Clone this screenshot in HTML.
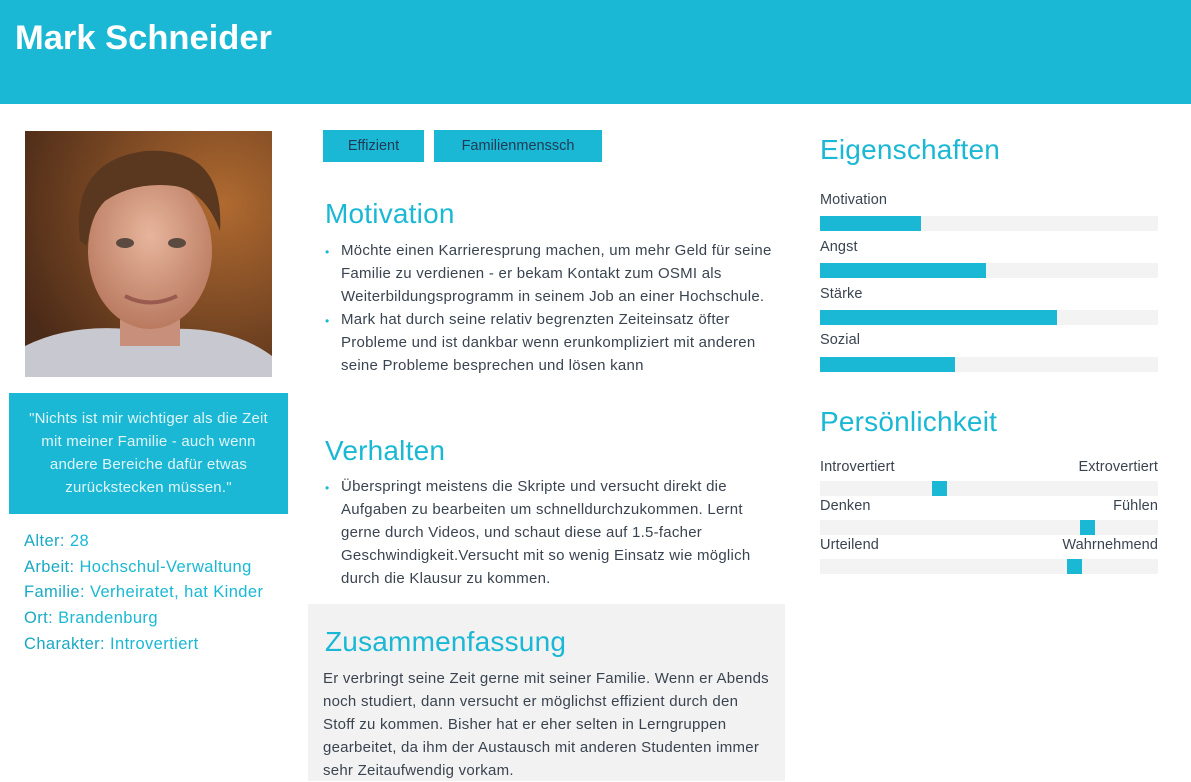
<!DOCTYPE html>
<html><head><meta charset="utf-8"><style>
*{margin:0;padding:0;box-sizing:border-box}
body{width:1191px;height:781px;overflow:hidden;background:#fff;font-family:"Liberation Sans",sans-serif;color:#3a4450;position:relative}
.a{position:absolute;white-space:nowrap}
.hdr{position:absolute;left:0;top:0;width:1191px;height:104px;background:#1ab8d4}
h1{position:absolute;left:15px;top:19px;font-size:34.5px;color:#fff;font-weight:bold;letter-spacing:0px}
.h2{position:absolute;font-size:28px;color:#1ab8d4;white-space:nowrap;letter-spacing:0.2px}
.t{font-size:15px;line-height:23px;letter-spacing:0.25px}
.b{position:absolute;left:325px;color:#1ab8d4;font-size:12px}
.tag{position:absolute;top:130px;height:32px;background:#1ab8d4;color:#1f3a55;font-size:14.5px;line-height:32px;text-align:center}
.bar{position:absolute;left:820px;width:338px;height:15px;background:#f3f3f3}
.bar i{position:absolute;left:0;top:0;height:15px;background:#1ab8d4}
.bar s{position:absolute;top:0;width:15px;height:15px;background:#1ab8d4}
.lbl{position:absolute;font-size:14.5px;color:#3a4450;letter-spacing:0.1px}
.info{font-size:16.5px;line-height:25.7px;color:#1ab8d4;letter-spacing:0.4px}
.info b{font-weight:normal;color:#1aa9c4}
</style></head><body>
<div class="hdr"></div><h1>Mark Schneider</h1>

<svg class="a" style="left:25px;top:131px" width="247" height="246" viewBox="0 0 247 246">
<defs><radialGradient id="bg" cx="0.8" cy="0.3" r="0.9"><stop offset="0" stop-color="#b06a30"/><stop offset="1" stop-color="#4a2a18"/></radialGradient>
<radialGradient id="sk" cx="0.5" cy="0.4" r="0.6"><stop offset="0" stop-color="#e7b59c"/><stop offset="1" stop-color="#b97a60"/></radialGradient></defs>
<rect width="247" height="246" fill="url(#bg)"/>
<path d="M0 246 L0 215 Q50 190 120 200 Q200 190 247 225 L247 246Z" fill="#c8c8d0"/>
<rect x="95" y="170" width="60" height="45" fill="#c8907a"/>
<ellipse cx="125" cy="120" rx="62" ry="78" fill="url(#sk)"/>
<path d="M55 110 Q45 30 120 20 Q200 15 195 100 Q180 60 150 55 Q110 50 80 70 Q65 85 62 115Z" fill="#5a3820"/>
<ellipse cx="100" cy="112" rx="9" ry="5" fill="#5a4a40"/><ellipse cx="152" cy="112" rx="9" ry="5" fill="#5a4a40"/>
<path d="M100 165 Q125 178 152 165" stroke="#9a5a50" stroke-width="4" fill="none"/>
</svg>

<div class="a t" style="left:9px;top:393px;width:279px;height:121px;background:#1ab8d4;color:#dff5f9;text-align:center;padding-top:14px;white-space:normal;font-size:15px;letter-spacing:0.2px">"Nichts ist mir wichtiger als die Zeit<br>mit meiner Familie - auch wenn<br>andere Bereiche dafür etwas<br>zurückstecken müssen."</div>

<div class="a info" style="left:24px;top:529px">
<b>Alter:</b> 28<br><b>Arbeit:</b> Hochschul-Verwaltung<br><b>Familie:</b> Verheiratet, hat Kinder<br><b>Ort:</b> Brandenburg<br><b>Charakter:</b> Introvertiert</div>

<div class="tag" style="left:323px;width:101px">Effizient</div>
<div class="tag" style="left:434px;width:168px">Familienmenssch</div>

<div class="h2" style="left:325px;top:198px">Motivation</div>
<div class="b" style="top:245px">•</div><div class="b" style="top:314px">•</div>
<div class="a t" style="left:341px;top:239px">Möchte einen Karrieresprung machen, um mehr Geld für seine<br>Familie zu verdienen - er bekam Kontakt zum OSMI als<br>Weiterbildungsprogramm in seinem Job an einer Hochschule.<br>Mark hat durch seine relativ begrenzten Zeiteinsatz öfter<br>Probleme und ist dankbar wenn erunkompliziert mit anderen<br>seine Probleme besprechen und lösen kann</div>

<div class="h2" style="left:325px;top:435px">Verhalten</div>
<div class="b" style="top:481px">•</div>
<div class="a t" style="left:341px;top:475px">Überspringt meistens die Skripte und versucht direkt die<br>Aufgaben zu bearbeiten um schnelldurchzukommen. Lernt<br>gerne durch Videos, und schaut diese auf 1.5-facher<br>Geschwindigkeit.Versucht mit so wenig Einsatz wie möglich<br>durch die Klausur zu kommen.</div>

<div class="a" style="left:308px;top:604px;width:477px;height:177px;background:#f2f2f2"></div>
<div class="h2" style="left:325px;top:626px">Zusammenfassung</div>
<div class="a t" style="left:323px;top:667px">Er verbringt seine Zeit gerne mit seiner Familie. Wenn er Abends<br>noch studiert, dann versucht er möglichst effizient durch den<br>Stoff zu kommen. Bisher hat er eher selten in Lerngruppen<br>gearbeitet, da ihm der Austausch mit anderen Studenten immer<br>sehr Zeitaufwendig vorkam.</div>

<div class="h2" style="left:820px;top:134px">Eigenschaften</div>
<div class="lbl" style="left:820px;top:192px">Motivation</div><div class="bar" style="top:216px"><i style="width:101px"></i></div>
<div class="lbl" style="left:820px;top:239px">Angst</div><div class="bar" style="top:263px"><i style="width:166px"></i></div>
<div class="lbl" style="left:820px;top:286px">Stärke</div><div class="bar" style="top:310px"><i style="width:237px"></i></div>
<div class="lbl" style="left:820px;top:332px">Sozial</div><div class="bar" style="top:357px"><i style="width:135px"></i></div>

<div class="h2" style="left:820px;top:406px">Persönlichkeit</div>
<div class="lbl" style="left:820px;top:459px">Introvertiert</div><div class="lbl" style="right:33px;top:459px">Extrovertiert</div>
<div class="bar" style="top:481px"><s style="left:112px"></s></div>
<div class="lbl" style="left:820px;top:498px">Denken</div><div class="lbl" style="right:33px;top:498px">Fühlen</div>
<div class="bar" style="top:520px"><s style="left:260px"></s></div>
<div class="lbl" style="left:820px;top:537px">Urteilend</div><div class="lbl" style="right:33px;top:537px">Wahrnehmend</div>
<div class="bar" style="top:559px"><s style="left:247px"></s></div>
</body></html>
